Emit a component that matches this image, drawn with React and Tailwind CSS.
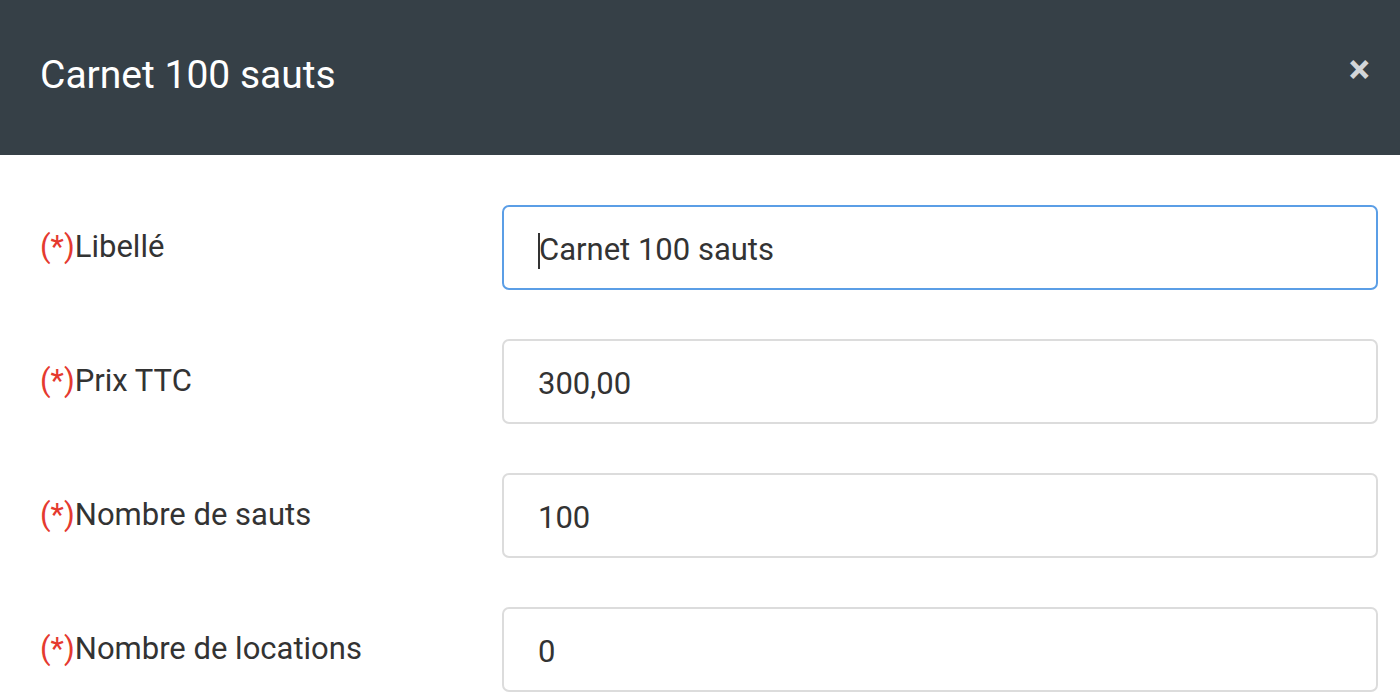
import React from "react";

const fields = [
  { label: "Libellé", value: "Carnet 100 sauts", focused: true },
  { label: "Prix TTC", value: "300,00" },
  { label: "Nombre de sauts", value: "100" },
  { label: "Nombre de locations", value: "0" },
];

export default function App() {
  return (
    <div className="w-[1400px] h-[700px] overflow-hidden bg-white font-['Roboto',sans-serif]">
      <div className="h-[155px] bg-[#364047] flex items-center justify-between pl-10 pr-[30px] pb-1">
        <h1 className="text-[39px] text-white font-normal">Carnet 100 sauts</h1>
        <span className="text-[40px] font-bold leading-none text-[#d3d6d9] mb-[12px]">×</span>
      </div>
      <div className="pt-[50px] pl-10 pr-[22px] flex flex-col gap-[49px]">
        {fields.map((f) => (
          <div key={f.label} className="flex items-center">
            <label className="w-[462px] text-[31px] text-[#333]">
              <span className="text-[#e53a2f]">(*)</span>
              {f.label}
            </label>
            <div
              className={
                "flex-1 h-[85px] rounded-[7px] border-2 flex items-center pl-[34px] pt-[6px] text-[31px] text-[#333] " +
                (f.focused ? "border-[#5b9ee6]" : "border-[#dcdcdc]")
              }
            >
              {f.focused && <span className="w-[2px] h-[36px] bg-[#333] -mr-[1px]" />}
              <span>{f.value}</span>
            </div>
          </div>
        ))}
      </div>
    </div>
  );
}
